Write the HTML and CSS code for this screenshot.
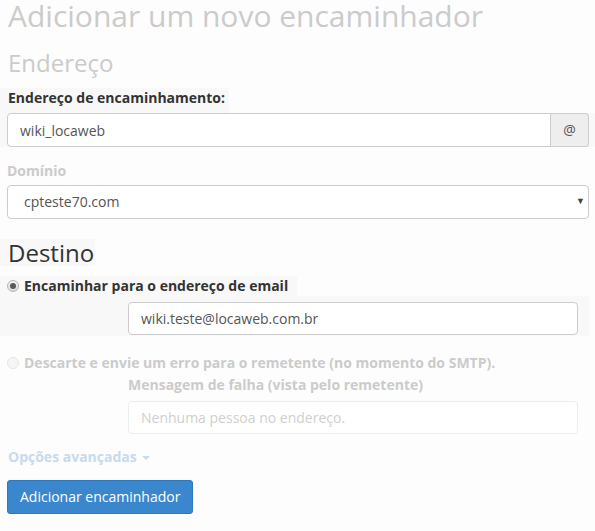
FILE: index.html
```html
<!DOCTYPE html>
<html lang="pt-BR">
<head>
  <meta charset="UTF-8" />
  <title>Adicionar um novo encaminhador</title>
  <link rel="stylesheet" href="styles.css">
</head>
<body>
  <div class="page">
    <h1 class="faded-text">Adicionar um novo encaminhador</h1>
    <h2 class="faded-text">Endereço</h2>

    <div class="form-group">
      <div class="label-row"><label for="email">Endereço de encaminhamento:</label></div>
      <div class="input-group lit">
        <input type="text" id="email" class="form-control" value="wiki_locaweb" />
        <span class="addon">@</span>
      </div>
    </div>

    <div class="form-group faded">
      <label for="domain">Domínio</label>
      <div class="select-wrap">
        <div id="domain" class="form-control select">cpteste70.com</div>
        <span class="arrow">&#9660;</span>
      </div>
    </div>

    <h3 class="dest">Destino</h3>

    <div class="radio lit">
      <span class="radio-dot checked"></span>
      <label>Encaminhar para o endereço de email</label>
    </div>
    <div class="indent lit-row">
      <input type="text" class="form-control short" value="wiki.teste@locaweb.com.br" />
    </div>

    <div class="faded">
      <div class="radio second">
        <span class="radio-dot"></span>
        <label>Descarte e envie um erro para o remetente (no momento do SMTP).</label>
      </div>
      <div class="indent">
        <label class="sub-label">Mensagem de falha (vista pelo remetente)</label>
        <input type="text" class="form-control short" placeholder="Nenhuma pessoa no endereço." />
      </div>
      <a class="advanced">Opções avançadas <span class="caret"></span></a>
    </div>

    <button type="button" class="btn">Adicionar encaminhador</button>
  </div>
</body>
</html>
```

FILE: styles.css
```css
* { box-sizing: border-box; }
body {
  margin: 0;
  background: #fdfdfd;
  font-family: "Open Sans", "Liberation Sans", sans-serif;
  font-size: 14px;
  line-height: 20px;
  color: #333;
}
.page { padding: 0 6px 0 7px; }

h1, h2, h3 { font-weight: 400; margin: 0; }
h1 {
  font-size: 30px;
  line-height: 36px;
  padding: 0 1px;
  margin-top: -2px;
}
h2 {
  font-size: 24px;
  line-height: 28px;
  padding: 0 1px;
  margin-top: 15px;
  margin-bottom: 11px;
}
.faded-text { color: #cbcbcb; }

label { font-weight: 700; }
.label-row {
  width: fit-content;
  background: #f8f8f8;
  margin-left: -7px;
  padding: 0 4px 5px 8px;
}

.form-group { margin-bottom: 14px; }
.form-group label { display: block; }

.form-control {
  display: block;
  width: 100%;
  height: 34px;
  padding: 6px 12px;
  font: inherit;
  color: #555;
  background: #fff;
  border: 1px solid #ccc;
  border-radius: 4px;
  outline: none;
}

.lit { background: #f8f8f8; }
.input-group {
  display: flex;
  margin: 0 -6px 0 -7px;
  padding: 0 6px 0 7px;
}
.input-group .form-control {
  flex: 1;
  border-radius: 4px 0 0 4px;
}
.addon {
  width: 38px;
  height: 34px;
  display: flex;
  align-items: center;
  justify-content: center;
  background: #eee;
  color: #555;
  border: 1px solid #ccc;
  border-left: none;
  border-radius: 0 4px 4px 0;
}

.faded label { color: #cbcbcb; }
.faded .form-control { border-color: #ececec; }
.faded .form-control::placeholder { color: #cfcfcf; }
.form-group.faded .form-control { color: #555; border-color: #ccc; }
.form-group.faded label { margin-bottom: 4px; }

.select-wrap { position: relative; }
.select { padding-left: 16px; line-height: 20px; }
.arrow {
  position: absolute;
  right: 4px;
  top: 10px;
  font-size: 9px;
  line-height: 12px;
  color: #444;
}

h3.dest {
  width: fit-content;
  font-size: 24px;
  line-height: 27px;
  margin: 20px 0 10px -7px;
  padding: 0 1px 0 8px;
  background: #f8f8f8;
}

.radio {
  display: flex;
  align-items: center;
  gap: 5px;
  height: 20px;
  margin-left: -7px;
  padding-left: 7px;
  width: 297px;
}
.radio label { color: #333; }
.radio-dot {
  width: 12px;
  height: 12px;
  border-radius: 50%;
  border: 1px solid #b5b5b5;
  background: linear-gradient(#f4f4f4, #dcdcdc);
  position: relative;
  flex: none;
}
.radio-dot.checked::after {
  content: "";
  position: absolute;
  left: 2px;
  top: 2px;
  width: 6px;
  height: 6px;
  border-radius: 50%;
  background: #5a5a5a;
}
.faded .radio-dot { border-color: #e6e6e6; background: #f6f6f6; }
.faded .radio label { color: #cbcbcb; }

.indent { padding-left: 121px; padding-right: 11px; }
.lit-row {
  background: #f8f8f8;
  margin-left: -7px;
  padding-left: 128px;
  padding-top: 6px;
  padding-bottom: 1px;
}
.short { height: 33px; }

.radio.second { margin-top: 17px; width: auto; }
.sub-label { display: block; margin: 2px 0 6px; }

.advanced {
  display: inline-block;
  margin: 13px 0 0 1px;
  font-weight: 700;
  color: #c6dbef;
}
.caret {
  display: inline-block;
  width: 0;
  height: 0;
  margin-left: 2px;
  vertical-align: middle;
  border-top: 4px solid #c6dbef;
  border-left: 4px solid transparent;
  border-right: 4px solid transparent;
}

.btn {
  display: block;
  margin-top: 13px;
  height: 34px;
  padding: 6px 12px;
  font: inherit;
  font-size: 14px;
  color: #fff;
  background: #3a87cd;
  border: 1px solid #2f78bd;
  border-radius: 3px;
}
```
